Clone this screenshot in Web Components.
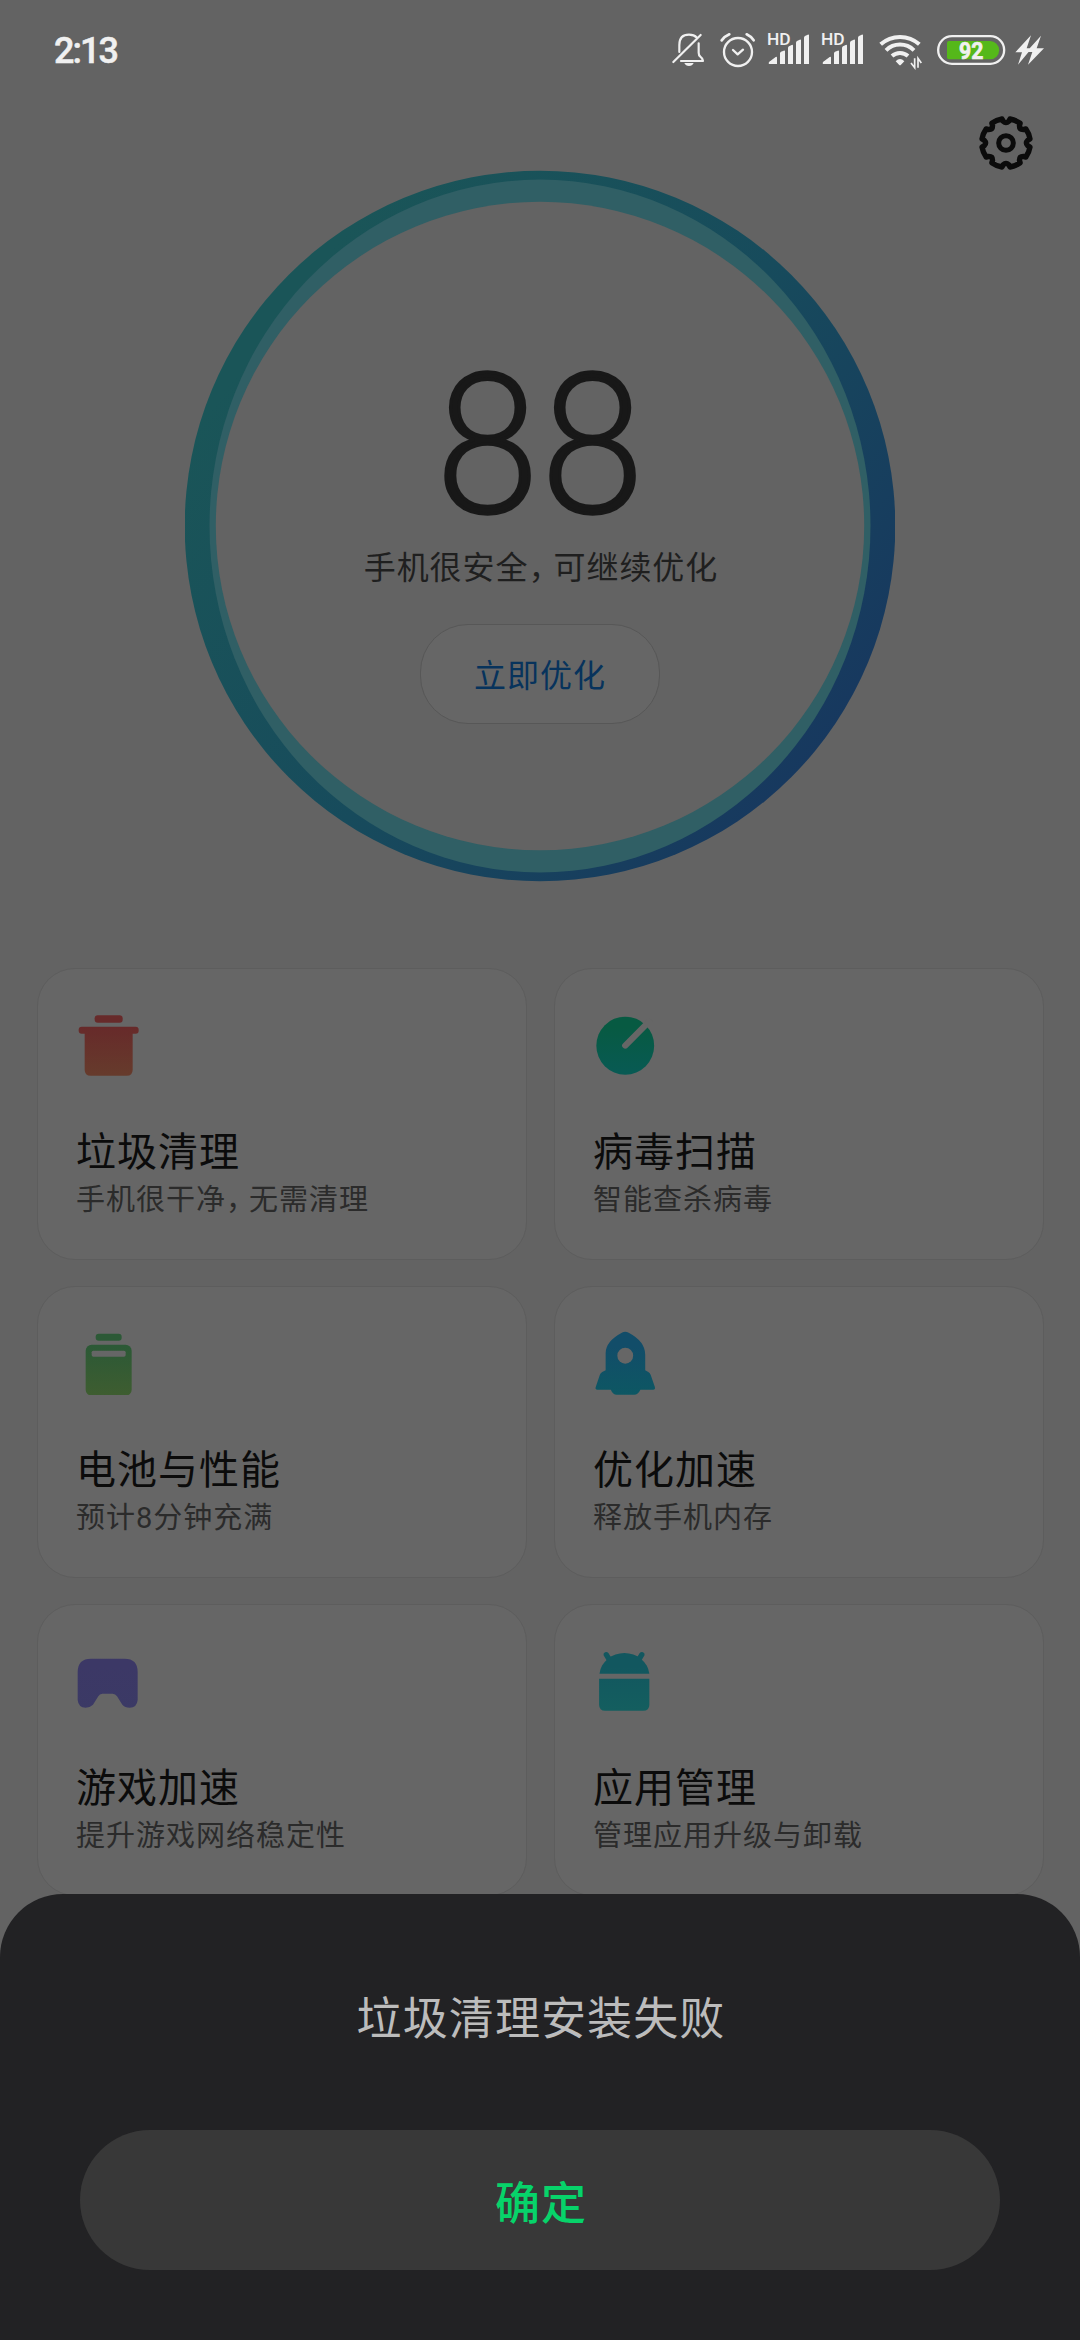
<!DOCTYPE html>
<html lang="zh-CN">
<head>
<meta charset="utf-8">
<title>手机管家</title>
<style>
html,body{margin:0;padding:0;background:#636363}
body{width:1080px;height:2340px;overflow:hidden;font-family:Roboto,"Noto Sans CJK SC",sans-serif}
</style>
</head>
<body>
<security-app></security-app>
<script>
const define = (name, html) => {
  const t = document.createElement('template');
  t.innerHTML = html;
  customElements.define(name, class extends HTMLElement {
    constructor() { super(); this.attachShadow({mode:'open'}).append(t.content.cloneNode(true)); }
  });
};

const bars = `<path d="M386 190Q386 186 390 184L407 171Q411 168 411 173V192H388Q386 192 386 190ZM420 160Q420 157 423 155L431 152Q435 150 435 154V192H420ZM444 144Q444 141 447 139L455 135Q459 133 459 137V192H444ZM468 128Q468 125 471 123L479 119Q483 117 483 121V192H468ZM492 113Q492 110 495 108L503 104Q507 102 507 106V192H492Z" stroke="none" fill="#f0f0f0"/>
<text x="381" y="136" textLength="71" lengthAdjust="spacingAndGlyphs">HD</text>`;

define('status-bar', `<style>
:host{display:flex;justify-content:space-between;box-sizing:border-box;height:90px;padding:30px 30px 0 54px;color:#f0f0f0}
.time{font:500 36px/42px Roboto,sans-serif;letter-spacing:-2px;-webkit-text-stroke:.5px #f0f0f0}
.icons{display:flex}
svg{display:block;height:40px;fill:none;stroke:#f0f0f0;stroke-linecap:round;stroke-linejoin:round}
text{font:500 47px Roboto,sans-serif;fill:#f0f0f0;stroke:none}
</style>
<div class="time">2:13</div>
<div class="icons">
<svg width="45" viewBox="90 90 135 120" stroke-width="6.500"><path d="M118 156V135Q118 104 147 104Q162 104 171 113M100 186L182 105M176 130V158Q176 166 181 170Q187 174 189 183H123"/><path d="M133 189H161Q157 198 147 198T133 189Z" fill="#f0f0f0" stroke="none"/></svg>
<svg width="45" viewBox="225 90 135 120" stroke-width="7"><circle cx="294" cy="156" r="42"/><path d="M279 150L293 163L309 149"/><path d="M245 121Q254 109 268 103M320 103Q333 109 341 121" stroke-width="8"/></svg>
<svg width="55" viewBox="360 90 165 120">${bars}</svg>
<svg width="55" viewBox="363 90 165 120">${bars}</svg>
<svg width="60" viewBox="690 90 180 120" stroke-width="12"><path d="M722 133A87 87 0 0 1 838 133M738 151A60 60 0 0 1 822 151M756 168A36 36 0 0 1 804 168" stroke-linecap="butt"/><path d="M767 184Q780 170 793 184L783 194Q780 197 777 194Z" fill="#f0f0f0" stroke="none"/><path d="M824 175V203L813 189M834 203V175L844 189" stroke-width="5" stroke-linecap="butt" stroke-linejoin="miter"/></svg>
<svg width="80" viewBox="870 90 240 120" stroke-width="7"><rect x="894.500" y="108.500" width="198" height="83" rx="41.500"/><path d="M921 129Q921 123 927 123H1050A27.500 27.500 0 0 1 1050 178H927Q921 178 921 172Z" fill="#55b81a" stroke="none"/><text x="957" y="177" textLength="73" lengthAdjust="spacingAndGlyphs" style="font-weight:700;font-size:74px;stroke:#f0f0f0;stroke-width:2px">92</text></svg>
<svg width="40" viewBox="1110 90 120 120"><path d="M1173 106L1126 157H1146L1134 194L1175 145H1160ZM1203 107L1159 156H1177L1164 194L1212 145H1190Z" fill="#f0f0f0" stroke="none"/></svg>
</div>`);

customElements.define('settings-button', class extends HTMLElement {
  constructor() {
    super();
    const pt = (x, r, deg) => {
      const a = deg * Math.PI / 180;
      return `${(x*Math.cos(a)+r*Math.sin(a)).toFixed(2)} ${(x*Math.sin(a)-r*Math.cos(a)).toFixed(2)}`;
    };
    let d = '';
    for (let i = 0; i < 8; i++) {
      const g = i * 45;
      d += `${i ? 'A73 73 0 0 1' : 'M'} ${pt(-12,72,g)}L${pt(-8,65,g)}Q${pt(0,57,g)} ${pt(8,65,g)}L${pt(12,72,g)}`;
    }
    this.attachShadow({mode:'open'}).innerHTML = `<style>:host{display:flex;justify-content:flex-end;padding:25px 46px 0 0;height:55px}svg{display:block}</style>
<svg width="56" height="56" viewBox="-84 -84 168 168" fill="none" stroke="#0b0b0b" stroke-linejoin="round"><path stroke-width="16" d="${d}A73 73 0 0 1 ${pt(-12,72,0)}Z"/><circle r="22" stroke-width="15"/></svg>`;
  }
});

define('score-ring', `<style>
:host{display:grid;width:710px;height:712px;margin:0 auto}
svg,.in{grid-area:1/1}
.in{display:flex;flex-direction:column;align-items:center}
.score{margin-top:167px;height:200px;font:300 195px/200px Lato,sans-serif;transform:scaleX(.93);-webkit-text-stroke:3.4px #181818;color:#181818}
.note{margin-top:7px;height:48px;font-size:32px;line-height:48px;letter-spacing:.95px;color:#1f1f1f;white-space:nowrap;padding-left:2px}
.c{letter-spacing:-7px}
button{margin-top:32px;width:240px;height:100px;box-sizing:border-box;border:1px solid #575757;border-radius:48px;background:#666;color:#07335c;font:400 32px/48px "Noto Sans CJK SC",sans-serif;letter-spacing:.95px;padding:0 0 2px}
</style>
<svg width="710" height="712" viewBox="0 0 710 712"><defs><linearGradient id="g" x1=".1" y1=".25" x2=".9" y2=".86"><stop offset="0" stop-color="#1a5558"/><stop offset=".5" stop-color="#174b5c"/><stop offset="1" stop-color="#17375f"/></linearGradient></defs>
<circle cx="355" cy="356" r="355.300" fill="url(#g)"/><ellipse cx="355" cy="356" rx="330.500" ry="346.500" fill="#305f65"/><circle cx="355" cy="356" r="324.200" fill="#636363"/></svg>
<div class="in"><div class="score">88</div><div class="note">手机很安全<span class="c">，</span>可继续优化</div><button>立即优化</button></div>`);

define('feature-card', `<style>
:host{display:flex;flex-direction:column;box-sizing:border-box;height:292px;border:1px solid #5d5d5d;border-radius:38px;background:#666;padding:42px 0 0 37px}
::slotted(svg){display:block;width:66px;height:66px}
.t{margin:48px 0 0 1.5px;height:56px;font-size:40px;line-height:56px;letter-spacing:1px;color:#0b0b0b;white-space:nowrap}
.s{margin:-1px 0 0 1.5px;height:40px;font-size:29px;line-height:40px;letter-spacing:1px;color:#2b2b2b;white-space:nowrap}
</style><slot name="icon"></slot><div class="t"><slot name="title"></slot></div><div class="s"><slot></slot></div>`);

const card = (title, sub, box, top, bottom, art) => `<feature-card><svg slot="icon" viewBox="${box}" preserveAspectRatio="none"><defs><linearGradient id="${title}" gradientUnits="userSpaceOnUse" x1="0" y1="195" x2="0" y2="376"><stop offset=".2" stop-color="${top}"/><stop offset="1" stop-color="${bottom}"/></linearGradient></defs><g fill="url(#${title})">${art}</g></svg><span slot="title">${title}</span>${sub}</feature-card>`;

define('feature-grid', `<style>:host{display:grid;grid-template-columns:490px 490px;gap:26px 27px;padding:86px 0 0 36.500px}.c{letter-spacing:-6px}</style>
${card('垃圾清理','手机很干净<span class="c">，</span>无需清理','163 184 198 198','#672a2a','#663b2c','<rect x="222" y="197" width="84" height="22" rx="9"/><rect x="174" y="231" width="180" height="21" rx="9"/><path d="M192 240H336V360Q336 378 318 378H210Q192 378 192 360Z"/>')}
${card('病毒扫描','智能查杀病毒','150.4 184 191.7 198','#075a42','#085a54','<ellipse cx="247" cy="288" rx="84" ry="87"/><path d="M247 288L316 216" stroke="#666" stroke-width="18" stroke-linecap="round"/>')}
${card('电池与性能','预计8分钟充满','163 178 198 198','#2c5936','#3e5d30','<rect x="225" y="192" width="78" height="21" rx="9"/><rect x="195" y="225" width="138" height="153" rx="18"/><rect x="213" y="243" width="102" height="18" rx="5" fill="#666"/>')}
${card('优化加速','释放手机内存','150.4 178 191.7 198','#124d69','#0d5763','<path d="M237 189Q247 183 257 189Q305 215 305 255V302L314 307Q319 310 321 316L333 352Q335 360 328 360H291Q284 375 273 375H222Q211 375 205 360H166Q159 360 161 353L173 316Q175 310 180 307L190 302V250Q190 215 237 189Z"/><ellipse cx="247" cy="258" rx="23" ry="24" fill="#666"/>')}
${card('游戏加速','提升游戏网络稳定性','163 172 198 198','#3c3866','#3b3a65','<path d="M171 247Q171 207 211 207H312Q351 207 351 247V331Q349 354 327 354Q312 354 305 345L289 320Q284 312 276 312H245Q237 312 233 320L217 345Q208 354 195 354Q173 354 171 331Z"/>')}
${card('应用管理','管理应用升级与卸载','150.4 172 191.7 198','#12575f','#145f5f','<path d="M172 252A73 70 0 0 1 317 252Z"/><path d="M184 197A8 8 0 0 1 198 190L207 205L197 219ZM303 197A8 8 0 0 0 289 190L280 205L290 219Z"/><path d="M171 267H317V345Q317 363 299 363H189Q171 363 171 345Z"/>')}`);

define('confirm-sheet', `<style>
:host{position:absolute;left:0;right:0;bottom:0;height:446px;box-sizing:border-box;border-radius:63px 63px 0 0;background:#222224;padding:92px 80px 70px;display:flex;flex-direction:column;justify-content:space-between;align-items:stretch}
.m{text-align:center;color:#bcbcbc;font-size:45px;line-height:68px;letter-spacing:1.1px;padding-left:2px}
button{height:140px;border:0;border-radius:70px;background:#383838;color:#07d36a;font:500 45px/68px "Noto Sans CJK SC",sans-serif;letter-spacing:1.1px;padding:2px 0 0 2px}
</style><div class="m"><slot></slot></div><button>确定</button>`);

define('security-app', `<style>:host{display:block;position:relative;width:1080px;height:2340px;overflow:hidden;background:#636363}</style>
<status-bar></status-bar><settings-button></settings-button><score-ring></score-ring><feature-grid></feature-grid><confirm-sheet>垃圾清理安装失败</confirm-sheet>`);
</script>
</body>
</html>
